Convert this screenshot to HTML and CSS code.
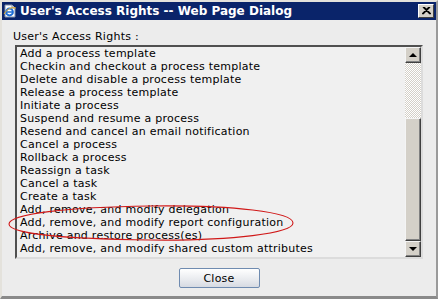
FILE: index.html
```html
<!DOCTYPE html>
<html lang="en">
<head>
    <meta charset="UTF-8" />
    <title>User's Access Rights -- Web Page Dialog</title>
    <link rel="stylesheet" href="styles.css">
</head>
<body>
<div class="window">
    <div class="titlebar">
        <svg class="app-icon" width="14" height="14" viewBox="0 0 14 14">
            <path d="M2 1 H9 L12 4 V13 H2 Z" fill="#ffffff" stroke="#7f8ea8" stroke-width="1"/>
            <path d="M9 1 V4 H12" fill="#dfe6f2" stroke="#7f8ea8" stroke-width="1"/>
            <circle cx="6.5" cy="8" r="3.4" fill="none" stroke="#1f6fd6" stroke-width="2"/>
            <path d="M3.5 8 H9.5" stroke="#1f6fd6" stroke-width="1.5"/>
            <path d="M1 10 Q6 2 13 4" fill="none" stroke="#f0b020" stroke-width="1"/>
        </svg>
        <span class="title">User's Access Rights -- Web Page Dialog</span>
        <span class="close-x">
            <svg width="9" height="8" viewBox="0 0 9 8">
                <path d="M1 0 L8 7 M8 0 L1 7 M2 0 L9 7 M7 0 L0 7" stroke="#000" stroke-width="1.2"/>
            </svg>
        </span>
    </div>

    <div class="content">
        <div class="caption">User's Access Rights :</div>

        <div class="listbox">
            <ul class="items">
                <li>Add a process template</li>
                <li>Checkin and checkout a process template</li>
                <li>Delete and disable a process template</li>
                <li>Release a process template</li>
                <li>Initiate a process</li>
                <li>Suspend and resume a process</li>
                <li>Resend and cancel an email notification</li>
                <li>Cancel a process</li>
                <li>Rollback a process</li>
                <li>Reassign a task</li>
                <li>Cancel a task</li>
                <li>Create a task</li>
                <li>Add, remove, and modify delegation</li>
                <li>Add, remove, and modify report configuration</li>
                <li>Archive and restore process(es)</li>
                <li>Add, remove, and modify shared custom attributes</li>
            </ul>
            <div class="scrollbar">
                <div class="sb-btn"><span class="arrow-up"></span></div>
                <div class="sb-track"></div>
                <div class="sb-thumb"></div>
                <div class="sb-btn"><span class="arrow-down"></span></div>
            </div>

            <!-- red hand-drawn mark over the report configuration row -->
            <svg class="mark" width="290" height="46" viewBox="0 0 290 46">
                <path d="M142 6 C 225 5, 285 12, 285 23 C 285 33, 225 41, 142 40 C 60 39, 1 34, 1 24 C 1 14, 60 7, 142 6 Z"
                      fill="none" stroke="#d01818" stroke-width="1.1"/>
            </svg>
        </div>

        <div class="actions">
            <button type="button" class="close-button">Close</button>
        </div>
    </div>
</div>
</body>
</html>
```

FILE: styles.css
```css
body {
    margin: 0;
    padding: 0;
    background-color: #ececec;
    font-family: 'DejaVu Sans', Verdana, sans-serif;
}

.window {
    width: 438px;
    height: 299px;
    box-sizing: border-box;
    border-top: 2px solid #e4e2dc;
    border-left: 2px solid #e4e2dc;
    border-right: 2px solid #9a9a9a;
    border-bottom: 3px solid #8a8a8a;
    background-color: #ececec;
    display: flex;
    flex-direction: column;
}

.titlebar {
    height: 18px;
    background-color: #0a246a;
    display: flex;
    align-items: center;
    padding-left: 1px;
    padding-right: 2px;
}

.app-icon {
    flex: none;
    margin-right: 3px;
}

.title {
    color: #ffffff;
    font-weight: bold;
    font-size: 12px;
    flex: 1;
    white-space: nowrap;
}

.close-x {
    width: 14px;
    height: 12px;
    background-color: #d4d0c8;
    border-top: 1px solid #ffffff;
    border-left: 1px solid #ffffff;
    border-right: 1px solid #404040;
    border-bottom: 1px solid #404040;
    display: flex;
    align-items: center;
    justify-content: center;
}

.content {
    flex: 1;
    padding: 10px 13px 0 11px;
    display: flex;
    flex-direction: column;
}

.caption {
    font-size: 11px;
    line-height: 13px;
    color: #000;
    letter-spacing: 0.25px;
    margin-bottom: 2px;
}

.listbox {
    position: relative;
    margin-left: 2px;
    height: 210px;
    display: flex;
    border-top: 2px solid #505050;
    border-left: 2px solid #505050;
    border-right: 2px solid #dcdcdc;
    border-bottom: 2px solid #dcdcdc;
    background-color: #f0f0f0;
}

.items {
    flex: 1;
    list-style: none;
    margin: 0;
    padding: 0 0 0 3px;
    overflow: hidden;
}

.items li {
    font-size: 11px;
    line-height: 13px;
    color: #000;
    letter-spacing: 0.25px;
    white-space: nowrap;
}

.scrollbar {
    width: 16px;
    display: flex;
    flex-direction: column;
}

.sb-btn, .sb-thumb {
    box-sizing: border-box;
    background-color: #d4d0c8;
    border-top: 1px solid #f4f4f4;
    border-left: 1px solid #f4f4f4;
    border-right: 1px solid #404040;
    border-bottom: 1px solid #404040;
    box-shadow: inset -1px -1px 0 #808080;
}

.sb-btn {
    height: 16px;
    display: flex;
    align-items: center;
    justify-content: center;
}

.sb-track {
    height: 55px;
    background-color: #ffffff;
    background-image: repeating-conic-gradient(#d4d0c8 0 25%, #ffffff 0 50%);
    background-size: 2px 2px;
}

.sb-thumb {
    flex: 1;
}

.arrow-up {
    width: 0;
    height: 0;
    border-left: 4px solid transparent;
    border-right: 4px solid transparent;
    border-bottom: 4px solid #000;
}

.arrow-down {
    width: 0;
    height: 0;
    border-left: 4px solid transparent;
    border-right: 4px solid transparent;
    border-top: 4px solid #000;
}

.mark {
    position: absolute;
    left: -9px;
    top: 153px;
}

.actions {
    display: flex;
    justify-content: center;
    padding-top: 9px;
    padding-left: 2px;
}

.close-button {
    width: 81px;
    height: 20px;
    font-family: 'DejaVu Sans', Verdana, sans-serif;
    font-size: 11px;
    letter-spacing: 0.25px;
    color: #000;
    border: 1px solid #6f8bb0;
    border-radius: 2px;
    background: linear-gradient(#ffffff, #e8eaee 60%, #d6dae2);
    padding: 0;
}
```
